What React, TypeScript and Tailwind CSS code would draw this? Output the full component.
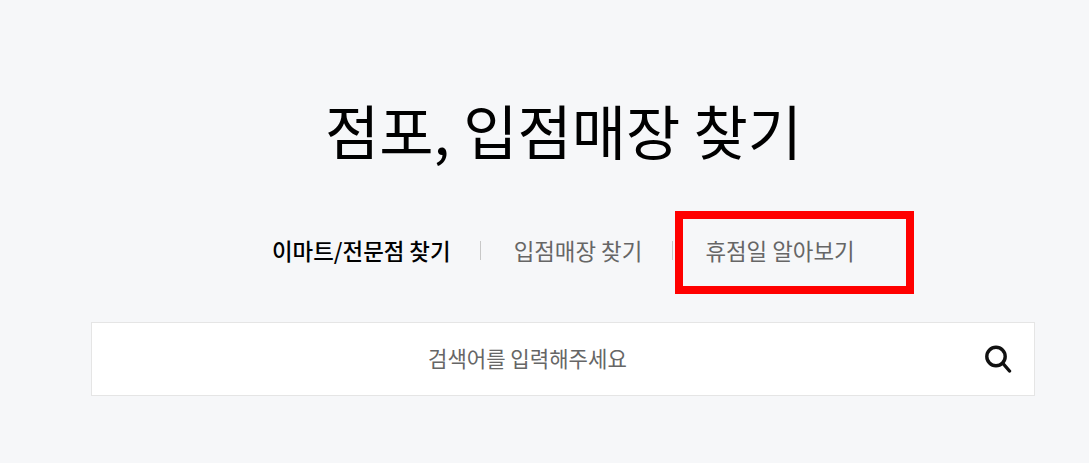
const tabs = [
  { label: "이마트/전문점 찾기", active: true },
  { label: "입점매장 찾기", active: false },
  { label: "휴점일 알아보기", active: false },
];

export default function App() {
  return (
    <div className="h-[463px] w-[1089px] overflow-hidden bg-[#f6f7f9] pt-[90px] font-['Noto_Sans_CJK_KR',sans-serif]">
      <h1 className="pl-[38px] text-center text-[59px] leading-[80px] font-normal text-black">
        점포, 입점매장 찾기
      </h1>

      <div className="mt-[40px] flex h-[82px] items-center pl-[272px]">
        {tabs.map((tab, i) => (
          <div key={tab.label} className="flex items-center">
            {i > 0 && <span className="mr-[32.6px] ml-[29.5px] h-[19px] w-px bg-[#c8c8c8]" />}
            <span
              className={
                tab.active
                  ? "text-[22.4px] font-medium text-black"
                  : "text-[22.4px] text-[#666]"
              }
            >
              {tab.label}
            </span>
          </div>
        ))}
      </div>

      {/* Red highlight box */}
      <div className="absolute top-[211px] left-[675px] h-[83px] w-[239px] border-[8px] border-[#ff0000]" />

      <div className="mt-[30px] ml-[91px] flex h-[74px] w-[944px] items-center border border-[#e5e5e5] bg-white pr-[22px]">
        <span className="flex-1 pl-[336px] text-[21.1px] text-[#666]">검색어를 입력해주세요</span>
        <svg width="28" height="28" viewBox="0 0 28 28" fill="none" stroke="#111" strokeWidth="3.4">
          <circle cx="12" cy="11.5" r="9.2" />
          <path d="M19 18.5l6.5 7.5" strokeLinecap="round" />
        </svg>
      </div>
    </div>
  );
}
